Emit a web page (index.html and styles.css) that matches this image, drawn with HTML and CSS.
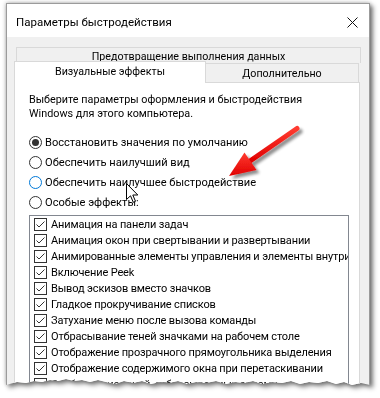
FILE: index.html
```html
<!DOCTYPE html>
<html lang="ru">
<head>
<meta charset="utf-8">
<title>Параметры быстродействия</title>
<link rel="stylesheet" href="styles.css">
</head>
<body>
<div class="page">
  <div class="shadow">
    <div class="window">
      <div class="titlebar">
        <span class="title">Параметры быстродействия</span>
        <svg class="close" width="11" height="11" viewBox="0 0 11 11"><path d="M0.5 0.5 L10.5 10.5 M10.5 0.5 L0.5 10.5" stroke="#111" stroke-width="1"/></svg>
      </div>
      <div class="body">
        <div class="tabs-row1">Предотвращение выполнения данных</div>
        <div class="tabs-row2">
          <div class="tab active">Визуальные эффекты</div>
          <div class="tab">Дополнительно</div>
        </div>
        <div class="panel">
          <p class="intro">Выберите параметры оформления и быстродействия<br>Windows для этого компьютера.</p>
          <div class="radios">
            <div class="radio checked"><span class="rb"></span>Восстановить значения по умолчанию</div>
            <div class="radio"><span class="rb"></span>Обеспечить наилучший вид</div>
            <div class="radio hover"><span class="rb"></span>Обеспечить наилучшее быстродействие</div>
            <div class="radio"><span class="rb"></span>Особые эффекты:</div>
          </div>
          <ul class="list">
            <li><span class="cb"><svg width="11" height="11" viewBox="0 0 11 11"><path d="M1.5 5.5 L4 8 L9.5 2.5" fill="none" stroke="#333" stroke-width="1"/></svg></span>Анимация на панели задач</li>
            <li><span class="cb"><svg width="11" height="11" viewBox="0 0 11 11"><path d="M1.5 5.5 L4 8 L9.5 2.5" fill="none" stroke="#333" stroke-width="1"/></svg></span>Анимация окон при свертывании и развертывании</li>
            <li><span class="cb"><svg width="11" height="11" viewBox="0 0 11 11"><path d="M1.5 5.5 L4 8 L9.5 2.5" fill="none" stroke="#333" stroke-width="1"/></svg></span>Анимированные элементы управления и элементы внутри</li>
            <li><span class="cb"><svg width="11" height="11" viewBox="0 0 11 11"><path d="M1.5 5.5 L4 8 L9.5 2.5" fill="none" stroke="#333" stroke-width="1"/></svg></span>Включение Peek</li>
            <li><span class="cb"><svg width="11" height="11" viewBox="0 0 11 11"><path d="M1.5 5.5 L4 8 L9.5 2.5" fill="none" stroke="#333" stroke-width="1"/></svg></span>Вывод эскизов вместо значков</li>
            <li><span class="cb"><svg width="11" height="11" viewBox="0 0 11 11"><path d="M1.5 5.5 L4 8 L9.5 2.5" fill="none" stroke="#333" stroke-width="1"/></svg></span>Гладкое прокручивание списков</li>
            <li><span class="cb"><svg width="11" height="11" viewBox="0 0 11 11"><path d="M1.5 5.5 L4 8 L9.5 2.5" fill="none" stroke="#333" stroke-width="1"/></svg></span>Затухание меню после вызова команды</li>
            <li><span class="cb"><svg width="11" height="11" viewBox="0 0 11 11"><path d="M1.5 5.5 L4 8 L9.5 2.5" fill="none" stroke="#333" stroke-width="1"/></svg></span>Отбрасывание теней значками на рабочем столе</li>
            <li><span class="cb"><svg width="11" height="11" viewBox="0 0 11 11"><path d="M1.5 5.5 L4 8 L9.5 2.5" fill="none" stroke="#333" stroke-width="1"/></svg></span>Отображение прозрачного прямоугольника выделения</li>
            <li><span class="cb"><svg width="11" height="11" viewBox="0 0 11 11"><path d="M1.5 5.5 L4 8 L9.5 2.5" fill="none" stroke="#333" stroke-width="1"/></svg></span>Отображение содержимого окна при перетаскивании</li>
            <li><span class="cb"><svg width="11" height="11" viewBox="0 0 11 11"><path d="M1.5 5.5 L4 8 L9.5 2.5" fill="none" stroke="#333" stroke-width="1"/></svg></span>Отображение теней, отбрасываемых окнами</li>
          </ul>
        </div>
      </div>
    </div>
  </div>

  <svg class="arrow" width="380" height="398" viewBox="0 0 380 398">
    <defs>
      <filter id="ash" x="-20%" y="-20%" width="160%" height="160%">
        <feGaussianBlur in="SourceAlpha" stdDeviation="1.6"/>
        <feOffset dx="3" dy="3" result="b"/>
        <feComponentTransfer><feFuncA type="linear" slope="0.45"/></feComponentTransfer>
        <feMerge><feMergeNode/><feMergeNode in="SourceGraphic"/></feMerge>
      </filter>
      <linearGradient id="ared" x1="0" y1="0" x2="0" y2="1">
        <stop offset="0" stop-color="#ff3b30"/>
        <stop offset="1" stop-color="#e00000"/>
      </linearGradient>
    </defs>
    <g filter="url(#ash)">
      <path d="M297 128.5 L250 161" stroke="url(#ared)" stroke-width="5" stroke-linecap="round" fill="none"/>
      <path d="M229 176 L244.5 152.5 L256.5 170 Z" fill="url(#ared)"/>
    </g>
  </svg>

  <svg class="cursor" width="14" height="22" viewBox="0 0 14 22">
    <path d="M0.5 0.5 L0.5 16.5 L4.5 12.8 L7.3 19.3 L9.5 18.3 L6.8 12 L11.8 12 Z" fill="#fff" stroke="#000" stroke-width="1" stroke-linejoin="miter"/>
  </svg>
</div>
</body>
</html>
```

FILE: styles.css
```css
* { box-sizing: border-box; }

html, body {
  margin: 0;
  padding: 0;
  background: #ffffff;
}

body {
  width: 380px;
  height: 398px;
  overflow: hidden;
  font-family: Roboto, "Noto Sans", "DejaVu Sans", sans-serif;
  font-size: 11px;
  color: #000;
}

.page {
  position: relative;
  width: 380px;
  height: 398px;
  padding: 3px 0 0 6px;
}

.shadow {
  width: 364px;
  filter: drop-shadow(0 0 2px rgba(0, 0, 0, 0.35)) drop-shadow(3px 3px 2px rgba(0, 0, 0, 0.45));
}

.window {
  width: 364px;
  height: 392px;
  background: #f0f0f0;
  border: 1px solid #9b9b9b;
  border-bottom: none;
  overflow: hidden;
  clip-path: polygon(0 0, 100% 0, 100% 382px,
    355px 380px, 346px 382px, 338px 379px, 330px 381px, 321px 378px, 312px 380px, 303px 379px,
    294px 381px, 285px 378px, 276px 380px, 266px 379px, 256px 381px, 247px 378px, 238px 380px,
    229px 379px, 220px 381px, 210px 378px, 200px 380px, 190px 379px, 181px 381px, 172px 378px,
    163px 380px, 154px 379px, 145px 381px, 136px 378px, 127px 380px, 118px 378px, 109px 381px,
    100px 379px, 92px 377px, 84px 379px, 76px 377px, 68px 378px, 60px 376px, 52px 378px,
    44px 377px, 36px 379px, 28px 378px, 20px 380px, 11px 379px, 0 382px);
}

.titlebar {
  height: 33px;
  background: #ffffff;
  display: flex;
  align-items: center;
  justify-content: space-between;
  padding: 2px 11px 0 9px;
}

.title {
  font-size: 11.5px;
  color: #000;
}

.close {
  display: block;
  margin-top: 1px;
}

.body {
  padding: 10px 8px 0 7px;
}

.tabs-row1 {
  margin-left: 2px;
  width: 345px;
  height: 16px;
  border: 1px solid #d9d9d9;
  border-bottom: none;
  text-align: center;
  font-size: 10.7px;
  line-height: 16px;
  padding-top: 1px;
}

.tabs-row2 {
  display: flex;
  align-items: flex-end;
  height: 19px;
  font-size: 10.7px;
}

.tab {
  width: 153px;
  height: 19px;
  border: 1px solid #d9d9d9;
  border-bottom: none;
  border-left: none;
  text-align: center;
  line-height: 19px;
}

.tab.active {
  position: relative;
  z-index: 1;
  width: 192px;
  height: 22px;
  margin-bottom: -1px;
  background: #ffffff;
  border-left: 1px solid #d9d9d9;
  line-height: 20px;
}

.panel {
  width: 346px;
  height: 400px;
  background: #ffffff;
  border: 1px solid #d9d9d9;
  padding: 10px 10px 0 14px;
}

.intro {
  margin: 0;
  font-size: 10.8px;
  line-height: 14px;
}

.radios {
  margin-top: 11px;
  display: flex;
  flex-direction: column;
  font-size: 11.1px;
}

.radio {
  height: 20px;
  display: flex;
  align-items: center;
  gap: 3px;
}

.rb {
  width: 13px;
  height: 13px;
  border: 1px solid #333;
  border-radius: 50%;
  display: grid;
  place-items: center;
  flex: none;
  background: #fff;
}

.radio.checked .rb::after {
  content: "";
  width: 7px;
  height: 7px;
  border-radius: 50%;
  background: #333;
}

.radio.hover .rb {
  border-color: #0078d7;
}

.list {
  list-style: none;
  margin: 3px 0 0 0;
  padding: 0 0 0 4px;
  width: 320px;
  height: 300px;
  border: 1px solid #828790;
  overflow: hidden;
  letter-spacing: -0.15px;
}

.list li {
  height: 16px;
  display: flex;
  align-items: center;
  gap: 4px;
  white-space: nowrap;
}

.cb {
  width: 13px;
  height: 13px;
  border: 1px solid #333;
  flex: none;
  display: block;
}

.cb svg {
  display: block;
}

.arrow {
  position: absolute;
  left: 0;
  top: 0;
  pointer-events: none;
}

.cursor {
  position: absolute;
  left: 126px;
  top: 183px;
  pointer-events: none;
}
```
